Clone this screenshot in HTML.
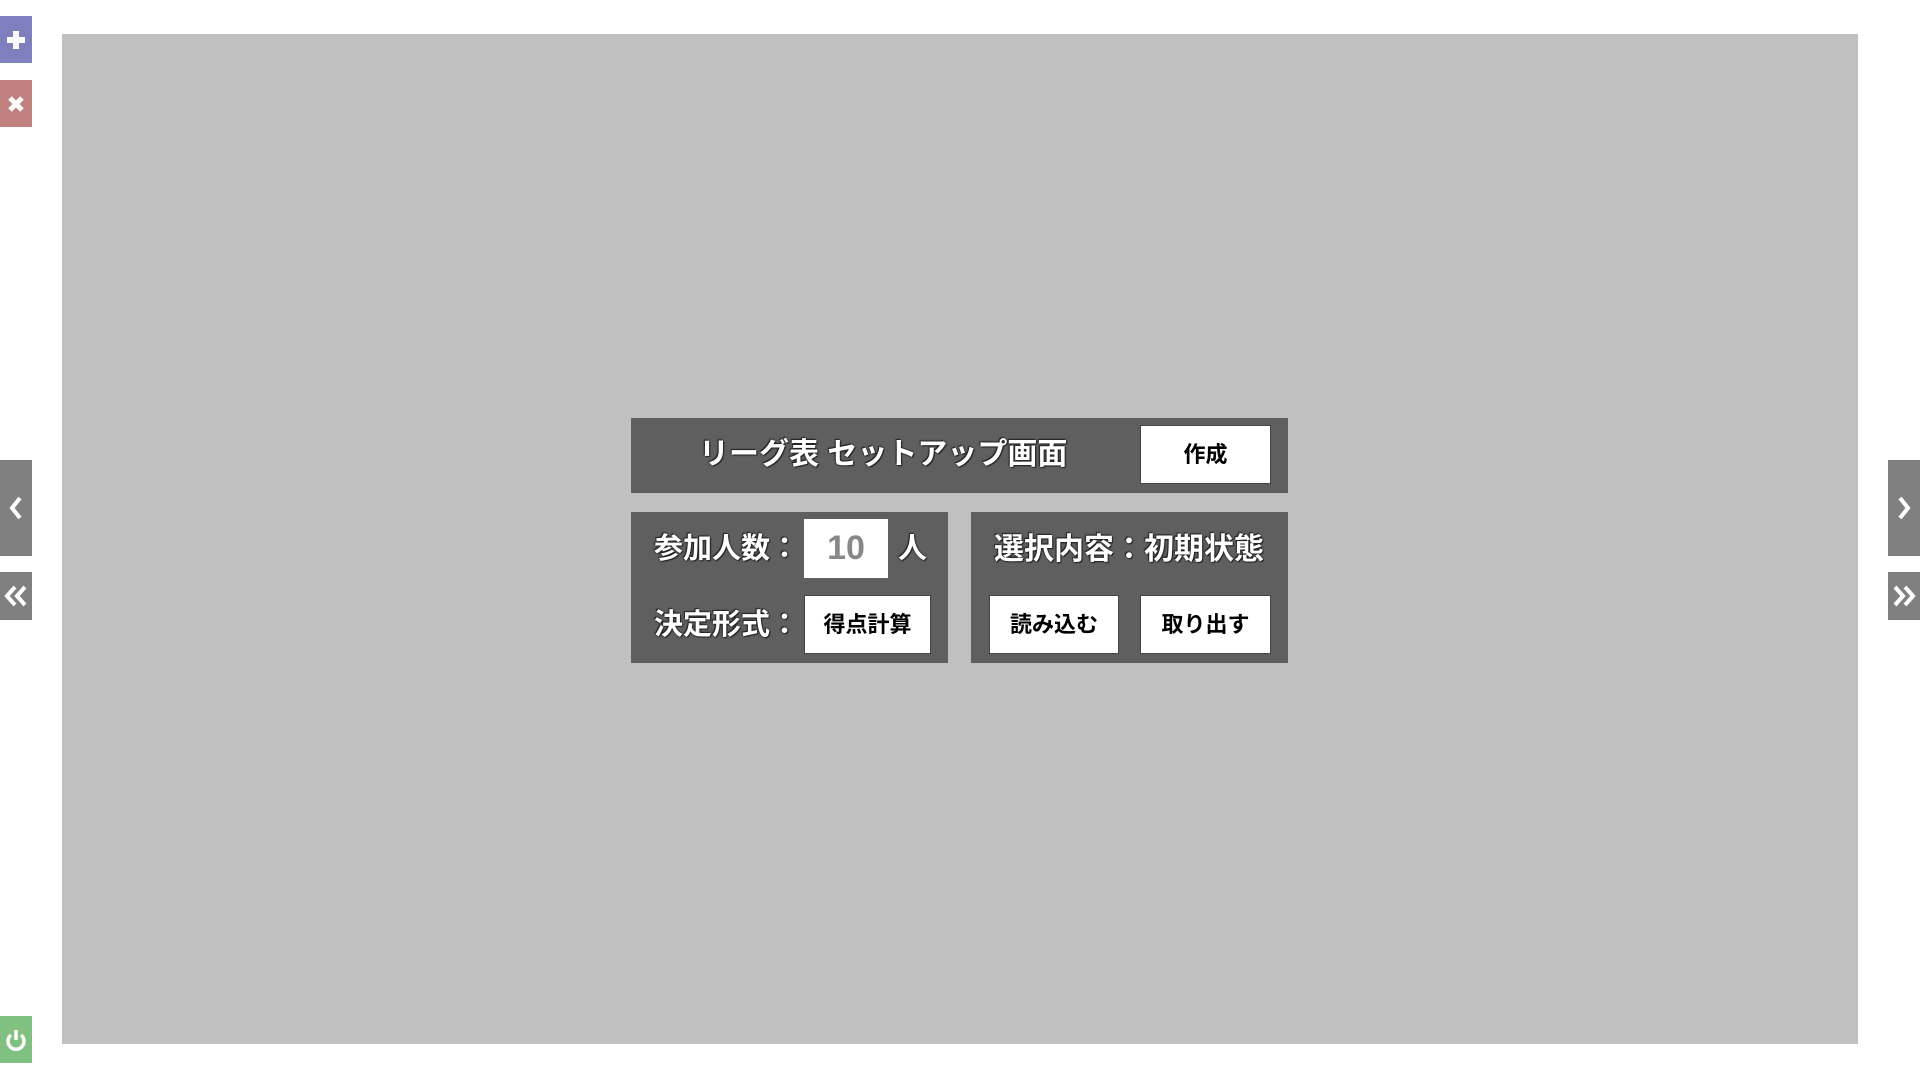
<!DOCTYPE html>
<html><head><meta charset="utf-8"><style>
*{margin:0;padding:0;box-sizing:border-box}
body{width:1920px;height:1080px;background:#fff;position:relative;overflow:hidden;font-family:"Liberation Sans","Noto Sans CJK JP",sans-serif;font-weight:bold}
.a{position:absolute}
.gray{left:62px;top:34px;width:1796px;height:1010px;background:#c0c0c0}
.panel{background:#5f5f5f}
.t{color:#fff;text-shadow:0 0 2px #222,1px 1px 1px #222,-1px -1px 1px #222;white-space:nowrap;line-height:1}
.btn{background:#fff;border:1px solid #444;color:#000;font-size:22px;display:flex;align-items:center;justify-content:center;padding-bottom:4px}
.sb{width:32px;display:flex;align-items:center;justify-content:center}
</style></head><body>
<div class="a gray"></div>
<div class="a sb" style="left:0;top:16px;height:47px;background:#8080c0"><svg width="18" height="18"><path d="M6 0h6v6h6v6h-6v6h-6v-6h-6v-6h6z" fill="#fff"/></svg></div>
<div class="a sb" style="left:0;top:80px;height:47px;background:#c08080"><svg width="16" height="16"><path d="M2 2L14 14M14 2L2 14" stroke="#fff" stroke-width="5"/></svg></div>
<div class="a sb" style="left:0;top:460px;height:96px;background:#808080"><svg width="14" height="24"><path d="M11 2L3 12L11 22" stroke="#fff" stroke-width="4" fill="none"/></svg></div>
<div class="a sb" style="left:0;top:572px;height:48px;background:#808080"><svg width="24" height="24"><path d="M11 3L3 12L11 21M21 3L13 12L21 21" stroke="#fff" stroke-width="4" fill="none"/></svg></div>
<div class="a sb" style="left:0;top:1016px;height:47px;background:#80c080"><svg width="22" height="22"><path d="M6 6A8 8 0 1 0 16 6" stroke="#fff" stroke-width="3.5" fill="none"/><path d="M11 1v10" stroke="#fff" stroke-width="3.5"/></svg></div>
<div class="a sb" style="left:1888px;top:460px;height:96px;background:#808080"><svg width="14" height="24"><path d="M3 2L11 12L3 22" stroke="#fff" stroke-width="4" fill="none"/></svg></div>
<div class="a sb" style="left:1888px;top:572px;height:48px;background:#808080"><svg width="24" height="24"><path d="M3 3L11 12L3 21M13 3L21 12L13 21" stroke="#fff" stroke-width="4" fill="none"/></svg></div>

<div class="a panel" style="left:631px;top:418px;width:657px;height:75px"></div>
<div class="a t" style="left:699px;top:440px;font-size:30px">リーグ表 セットアップ画面</div>
<div class="a btn" style="left:1140px;top:425px;width:131px;height:59px">作成</div>

<div class="a panel" style="left:631px;top:512px;width:317px;height:151px"></div>
<div class="a t" style="left:654px;top:535px;font-size:29px">参加人数：</div>
<div class="a" style="left:804px;top:519px;width:84px;height:59px;background:#fff;color:#888;font-size:34px;display:flex;align-items:center;justify-content:center">10</div>
<div class="a t" style="left:898px;top:535px;font-size:29px">人</div>
<div class="a t" style="left:654px;top:611px;font-size:29px">決定形式：</div>
<div class="a btn" style="left:804px;top:595px;width:127px;height:59px">得点計算</div>

<div class="a panel" style="left:971px;top:512px;width:317px;height:151px"></div>
<div class="a t" style="left:994px;top:535px;font-size:30px">選択内容：初期状態</div>
<div class="a btn" style="left:989px;top:595px;width:130px;height:59px">読み込む</div>
<div class="a btn" style="left:1140px;top:595px;width:131px;height:59px">取り出す</div>
</body></html>
